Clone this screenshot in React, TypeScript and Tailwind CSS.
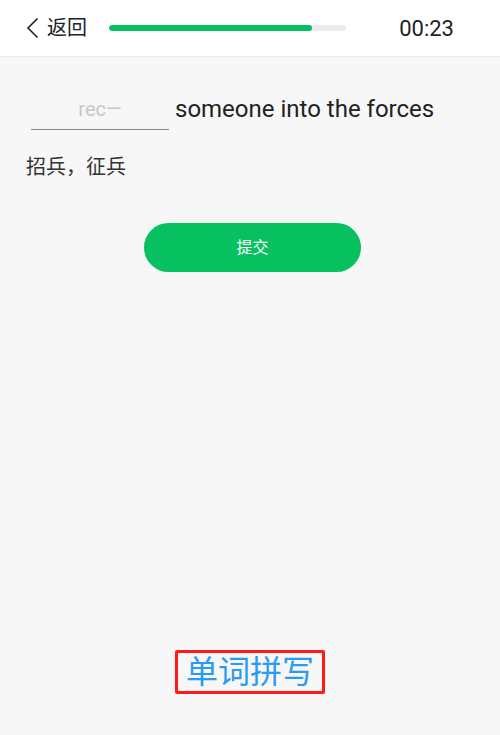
import { useState } from 'react';

const FONT = { fontFamily: 'Roboto, "Noto Sans CJK SC", sans-serif' };

export default function App() {
  const [value, setValue] = useState('');
  const progress = 85.7;

  return (
    <div className="w-[500px] h-[735px] bg-[#f7f7f7] flex flex-col" style={FONT}>
      {/* header */}
      <div className="h-[57px] bg-white border-b border-[#e8eaee] flex items-center pl-[26px] pr-[46px]">
        <button className="flex items-center gap-[7px] text-[20px] text-[#222] leading-none">
          <svg width="14" height="22" viewBox="0 0 14 22" fill="none">
            <path d="M11.5 1.5 L2 11 L11.5 20.5" stroke="#222" strokeWidth="1.6" />
          </svg>
          <span>返回</span>
        </button>
        <div className="ml-[22px] w-[237px] h-[6px] rounded-full bg-[#ebebeb] overflow-hidden">
          <div className="h-full rounded-full bg-[#07c160]" style={{ width: `${progress}%` }} />
        </div>
        <div className="ml-auto text-[22px] text-[#222]">00:23</div>
      </div>

      {/* question */}
      <div className="pt-[34px] px-[26px]">
        <div className="flex items-end">
          <input
            value={value}
            onChange={e => setValue(e.target.value)}
            placeholder="rec—"
            className="ml-[5px] w-[138px] h-[39px] pb-[2px] border-b border-[#8a8a8e] bg-transparent text-center text-[20px] text-[#222] placeholder:text-[#c8c8c8] outline-none"
          />
          <span className="ml-[6px] pb-[9px] text-[24px] text-[#222] leading-none">someone into the forces</span>
        </div>
        <div className="mt-[27px] text-[20px] text-[#333] leading-none">招兵，征兵</div>
      </div>

      <div className="flex justify-center mt-[46px] pl-[5px]">
        <button className="w-[217px] h-[49px] rounded-full bg-[#07c160] text-white text-[16px]">提交</button>
      </div>

      <div className="mt-auto mb-[41px] flex justify-center">
        <div className="border-[3px] border-[#ff1a1a] rounded-[2px] px-[8px] text-[32px] leading-[38px] text-[#2b9af3]">
          单词拼写
        </div>
      </div>
    </div>
  );
}
